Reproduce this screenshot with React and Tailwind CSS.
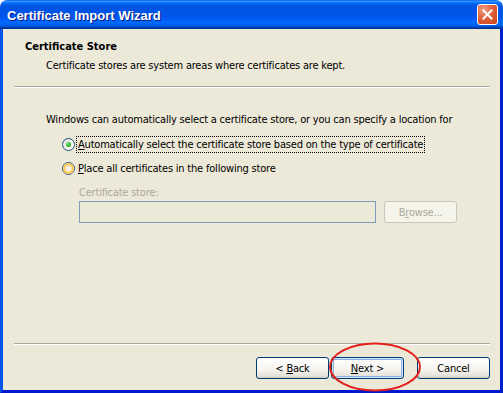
import React from "react";

const font = { fontFamily: '"DejaVu Sans Condensed", "DejaVu Sans", Tahoma, sans-serif' };

function Radio({ checked, hover }) {
  return (
    <span className="relative inline-flex h-[13px] w-[13px] shrink-0 items-center justify-center rounded-full border border-[#1C5180] bg-[linear-gradient(135deg,#DCDBD5_0%,#F4F3EE_55%,#FFFFFF_100%)]">
      {hover && (
        <span className="absolute inset-0 rounded-full shadow-[inset_0_0_0_2px_#F9C75A,inset_0_0_0_3px_#FDE3A4]" />
      )}
      {checked && (
        <span className="relative h-[5px] w-[5px] rounded-full bg-[radial-gradient(circle_at_35%_35%,#8FE88F_0%,#28B628_50%,#1A9A1A_100%)]" />
      )}
    </span>
  );
}

function XPButton({ children, def, disabled, className = "" }) {
  const base =
    "flex h-[22px] w-[73px] items-center justify-center rounded-[3px] text-[11px] leading-none";
  if (disabled)
    return (
      <div className={`${base} border border-[#C9C7BA] bg-[#F5F4EA] text-[#ACA899] ${className}`}>
        <span>{children}</span>
      </div>
    );
  return (
    <div
      className={`${base} border border-[#003C74] bg-[linear-gradient(to_bottom,#FFFFFF_0%,#F4F3EE_60%,#E6E3DA_88%,#D6D0C5_100%)] text-black ${
        def
          ? "shadow-[inset_0_0_0_1px_#CEE7FF,inset_0_0_0_2px_#8DB2E3]"
          : "shadow-[inset_0_-1px_0_#D6D0C5]"
      } ${className}`}
    >
      <span>{children}</span>
    </div>
  );
}

export default function App() {
  return (
    <div
      className="relative flex h-[393px] w-[503px] flex-col bg-white text-[11px] tracking-[-0.2px] text-black"
      style={font}
    >
      {/* Title bar */}
      <div className="flex h-[29px] shrink-0 items-center justify-between rounded-t-[7px] bg-[linear-gradient(to_bottom,#0058EE_0%,#3A93FF_4%,#288EFF_6%,#127DFF_8%,#036FFC_10%,#0262EE_14%,#0057E5_20%,#0054E3_24%,#0055EB_56%,#005BF5_66%,#026AFE_76%,#0062EF_86%,#0052D6_92%,#0040AB_94%,#003092_100%)] pl-[7px] pr-[5px]">
        <span
          className="pt-[1px] text-[13px] font-bold leading-none tracking-[0px] text-white [text-shadow:1px_1px_0_#0A1883]"
          style={{ fontFamily: '"Liberation Sans", Arial, sans-serif' }}
        >
          Certificate Import Wizard
        </span>
        <div className="flex h-[21px] w-[21px] items-center justify-center rounded-[3px] border border-white bg-[radial-gradient(circle_at_30%_25%,#F0A088_0%,#E2663F_40%,#C8401A_100%)]">
          <svg width="11" height="11" viewBox="0 0 11 11">
            <path d="M1.5 1.5 L9.5 9.5 M9.5 1.5 L1.5 9.5" stroke="white" strokeWidth="2" strokeLinecap="square" />
          </svg>
        </div>
      </div>

      {/* Client */}
      <div className="flex flex-1 flex-col border-b-[3px] border-l-[3px] border-r-[3px] border-b-[#0019CF] border-l-[#0A55E8] border-r-[#0021C8] bg-[#ECE9D8]">
        <div className="pl-[22px] pt-[11px] font-bold leading-[13px] tracking-normal">Certificate Store</div>
        <div className="mt-[6px] pl-[43px] leading-[13px]">
          Certificate stores are system areas where certificates are kept.
        </div>
        <div className="ml-[11px] mr-[10px] mt-[14px] h-[2px] border-b border-t border-b-white border-t-[#ACA899]" />

        <div className="mt-[25px] pl-[43px] leading-[13px]">
          Windows can automatically select a certificate store, or you can specify a location for
        </div>

        <div className="mt-[10px] flex h-[17px] items-center pl-[59px]">
          <Radio checked />
          <span className="ml-[1px] border border-dotted border-black px-[1px] leading-[15px]">
            <u>A</u>utomatically select the certificate store based on the type of certificate
          </span>
        </div>
        <div className="mt-[7px] flex h-[17px] items-center pl-[59px]">
          <Radio hover />
          <span className="ml-[2px] px-[1px] leading-[15px]">
            <u>P</u>lace all certificates in the following store
          </span>
        </div>

        <div className="mt-[9px] pl-[76px] leading-[13px] text-[#ACA899]">Certificate store:</div>
        <div className="mt-[2px] flex items-center pl-[76px]">
          <div className="h-[22px] w-[297px] border border-[#7F9DB9] bg-[#ECE9D8]" />
          <XPButton disabled className="ml-[8px] h-[21px]">
            B<u>r</u>owse...
          </XPButton>
        </div>

        <div className="flex-1" />

        <div className="ml-[11px] mr-[10px] h-[2px] border-b border-t border-b-white border-t-[#ACA899]" />
        <div className="mt-[12px] flex justify-end pb-[11px] pr-[10px]">
          <XPButton>
            &lt; <u>B</u>ack
          </XPButton>
          <XPButton def className="ml-[2px]">
            <u>N</u>ext &gt;
          </XPButton>
          <XPButton className="ml-[13px]">Cancel</XPButton>
        </div>
      </div>

      {/* Red annotation ellipse */}
      <svg className="pointer-events-none absolute left-[329px] top-[342px]" width="92" height="50" viewBox="0 0 92 50">
        <ellipse cx="46" cy="25" rx="45" ry="23.5" fill="none" stroke="#E3201B" strokeWidth="2" />
      </svg>
    </div>
  );
}
